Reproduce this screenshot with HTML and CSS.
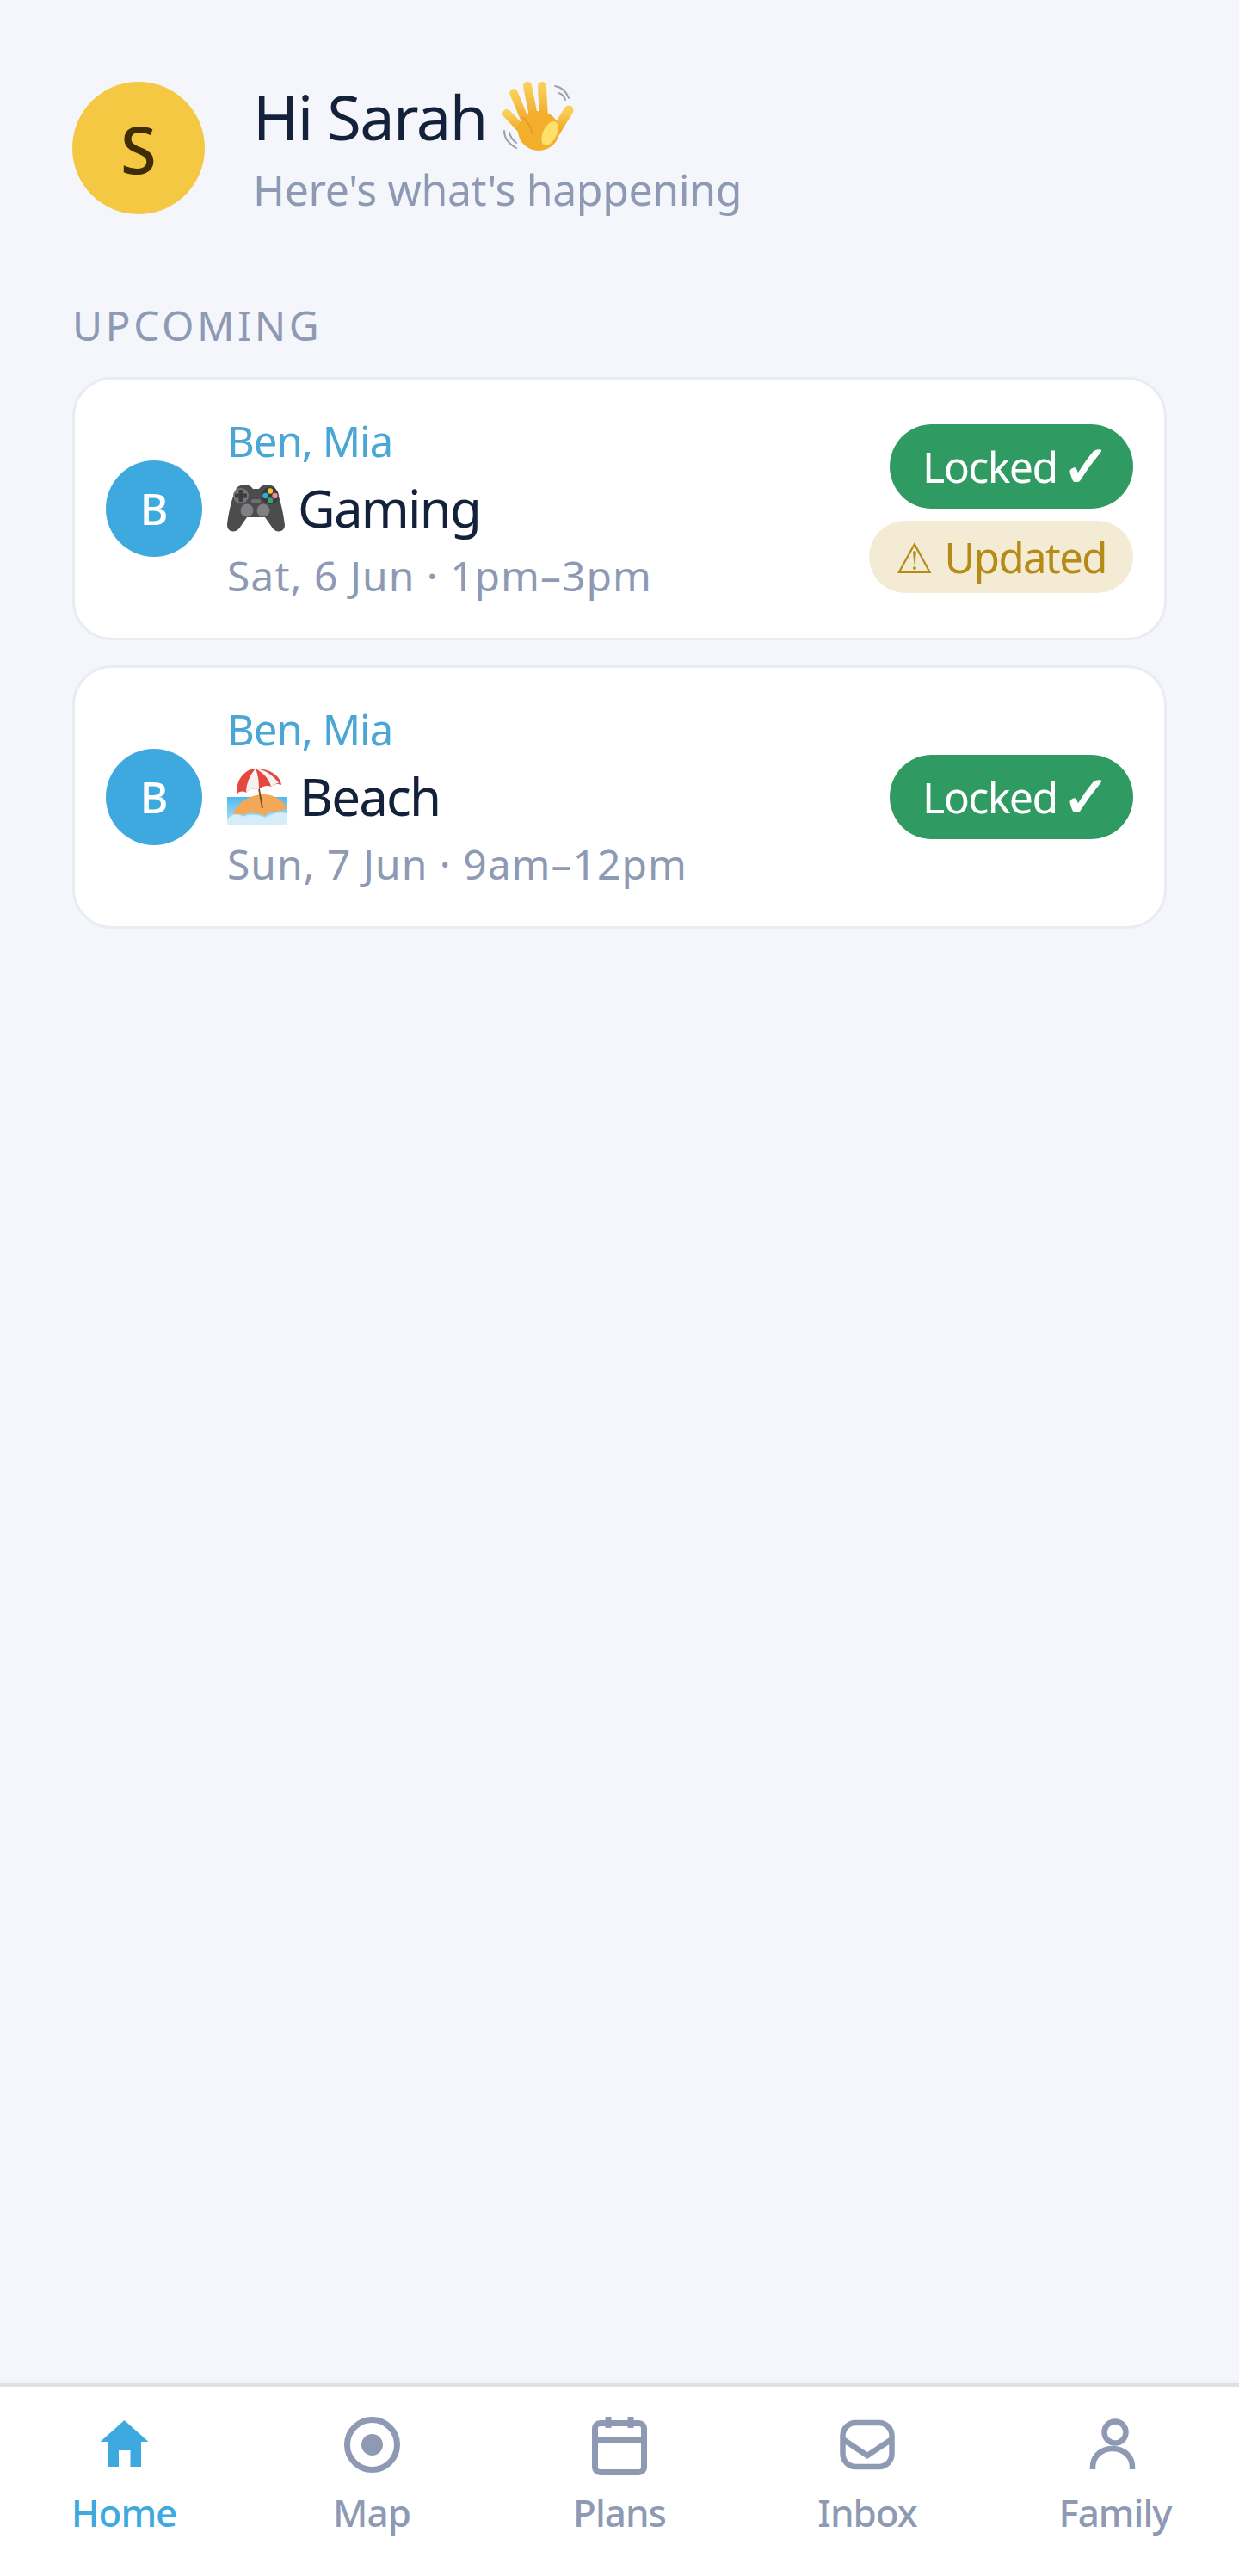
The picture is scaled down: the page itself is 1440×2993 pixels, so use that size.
FILE: index.html
```html
<!DOCTYPE html>
<html>
<head>
    <meta charset="UTF-8">
    <title>Home</title>
    <link rel="stylesheet" href="styles.css">
</head>
<body>
<div class="page">
    <div class="main">
        <div class="header">
            <div class="avatar">S</div>
            <div class="header_text">
                <div class="hello">Hi Sarah
                    <svg class="emoji_hand" viewBox="0 0 84 82">
                        <defs>
                            <linearGradient id="skin" x1="0" y1="0" x2="0" y2="1">
                                <stop offset="0" stop-color="#f9cf56"/>
                                <stop offset="1" stop-color="#f0a626"/>
                            </linearGradient>
                        </defs>
                        <g fill="none" stroke="#9aa3ad" stroke-width="2" stroke-linecap="round">
                            <path d="M62 6c7 1 13 6 16 14"/>
                            <path d="M66 14c4 1 7 4 8 8"/>
                            <path d="M3 58c0 8 5 15 14 20"/>
                            <path d="M9 60c1 5 4 9 8 12"/>
                        </g>
                        <g stroke="url(#skin)" stroke-linecap="round" fill="none">
                            <path d="M14 14 29 50" stroke-width="9.500"/>
                            <path d="M30 6 38 46" stroke-width="10"/>
                            <path d="M47 6 49 46" stroke-width="10"/>
                            <path d="M6 38 25 58" stroke-width="10"/>
                            <path d="M78 34 62 60" stroke-width="11"/>
                        </g>
                        <ellipse cx="43" cy="58" rx="24" ry="23" fill="#f3ae2c"/>
                        <ellipse cx="56" cy="61" rx="8" ry="15" transform="rotate(25 56 61)" fill="#ffe06a"/>
                        <path d="M24 42c6 4 10 12 12 20" fill="none" stroke="#e0952a" stroke-width="1.500"/>
                    </svg>
                </div>
                <div class="hello_sub">Here's what's happening</div>
            </div>
        </div>
        <div class="section_title">UPCOMING</div>
        <div class="card">
            <div class="card_avatar">B</div>
            <div class="card_text">
                <div class="names">Ben, Mia</div>
                <div class="event">
                    <svg class="emoji_game" viewBox="0 0 67 55">
                        <path d="M12 3C17-1 27-1 30 5H37C40-1 50-1 55 3 60 8 66 35 67 47 67 55 58 57 53 51L44 38H23L14 51C9 57 0 55 0 47 1 35 7 8 12 3Z" fill="#4c4b4e"/>
                        <circle cx="16" cy="13" r="9" fill="#77767a"/>
                        <path d="M13.500 6h5v4.500H23v5h-4.500V20h-5v-4.500H9v-5h4.500z" fill="#3d3c3f"/>
                        <circle cx="50" cy="13" r="10" fill="#3a393c"/>
                        <circle cx="50" cy="7.500" r="3.200" fill="#f4c92e"/>
                        <circle cx="55.500" cy="13" r="3.200" fill="#ee8aa0"/>
                        <circle cx="44.500" cy="13" r="3.200" fill="#3aa6dc"/>
                        <circle cx="50" cy="18.500" r="3.200" fill="#35a86f"/>
                        <rect x="28" y="17" width="11" height="5" rx="2" fill="#6e6d71"/>
                        <circle cx="23" cy="30" r="7.500" fill="#807f83"/>
                        <circle cx="42" cy="30" r="7.500" fill="#807f83"/>
                    </svg>
                    <span>Gaming</span>
                </div>
                <div class="when">Sat, 6 Jun · 1pm–3pm</div>
            </div>
            <div class="pills">
                <div class="pill_locked">Locked <span class="check">✓</span></div>
                <div class="pill_updated"><span class="warn">⚠</span> Updated</div>
            </div>
        </div>
        <div class="card">
            <div class="card_avatar">B</div>
            <div class="card_text">
                <div class="names">Ben, Mia</div>
                <div class="event">
                    <svg class="emoji_beach" viewBox="0 0 69 66">
                        <defs>
                            <linearGradient id="sea" x1="0" y1="0" x2="0" y2="1">
                                <stop offset="0" stop-color="#4fb8ec"/>
                                <stop offset="1" stop-color="#b9e3f6"/>
                            </linearGradient>
                        </defs>
                        <rect y="34" width="69" height="32" fill="url(#sea)"/>
                        <path d="M7 56C10 40 28 31 42 31 55 31 66 38 69 47 66 51 60 48 56 52 51 49 47 52 44 56 36 52 26 51 18 55 14 53 10 54 7 56Z" fill="#f3a857"/>
                        <path d="M0 60C6 52 14 53 18 57 26 53 36 54 44 58 50 54 60 50 69 53V66H0Z" fill="#d5edf8"/>
                        <path d="M33 2 41 47" stroke="#7a4a24" stroke-width="1.800"/>
                        <path d="M12 30C9 14 22 1 33 1 49 1 62 9 63 20 58 18 54 19 51 22 47 20 41 21 37 25 31 23 25 25 22 29 19 27 15 27 12 30Z" fill="#e5483f"/>
                        <path d="M33 1C27 8 22 18 22 29 25 25 31 23 37 25 37 16 36 8 33 1ZM33 1C42 6 49 13 51 22 54 19 58 18 60 18 54 9 44 2 33 1Z" fill="#f6f1f3"/>
                    </svg>
                    <span>Beach</span>
                </div>
                <div class="when">Sun, 7 Jun · 9am–12pm</div>
            </div>
            <div class="pills">
                <div class="pill_locked">Locked <span class="check">✓</span></div>
            </div>
        </div>
    </div>
    <div class="nav">
        <div class="nav_item active">
            <svg viewBox="0 0 64 72"><path d="M32.500 4 4.500 29H13v29h13V39h13.500v19H52V29h8.500z" fill="currentColor"/></svg>
            <span>Home</span>
        </div>
        <div class="nav_item">
            <svg viewBox="0 0 64 72"><circle cx="32.500" cy="32.500" r="29" fill="none" stroke="currentColor" stroke-width="7"/><circle cx="32.500" cy="32.500" r="12.500" fill="currentColor"/></svg>
            <span>Map</span>
        </div>
        <div class="nav_item">
            <svg viewBox="0 0 64 72" fill="none" stroke="currentColor" stroke-width="7"><rect x="3.500" y="7.500" width="57" height="57" rx="6"/><path d="M3.500 27h57M19 0v13M45 0v13"/></svg>
            <span>Plans</span>
        </div>
        <div class="nav_item">
            <svg viewBox="0 0 64 72" fill="none" stroke="currentColor" stroke-width="6.500"><rect x="3.500" y="7" width="57" height="51" rx="15"/><path d="M5 27 32 45 59 27"/></svg>
            <span>Inbox</span>
        </div>
        <div class="nav_item">
            <svg viewBox="0 0 64 72" fill="none" stroke="currentColor" stroke-width="6.500"><circle cx="32" cy="18" r="12.500"/><path d="M6 61V58C6 46 16 37 29 37S52 46 52 58v3"/></svg>
            <span>Family</span>
        </div>
    </div>
</div>
</body>
</html>
```

FILE: styles.css
```css
* {
    margin: 0;
    padding: 0;
    box-sizing: border-box;
}

body {
    background: #f4f6fb;
    font-family: "Noto Sans", sans-serif;
    color: #14213a;
}

.page {
    height: 2993px;
    display: flex;
    flex-direction: column;
}

.main {
    flex: 1;
    padding: 95px 84px 0;
}

.header {
    display: flex;
    align-items: center;
    gap: 56px;
}

.avatar {
    width: 154px;
    height: 154px;
    border-radius: 50%;
    background: #f4c842;
    color: #3f2e05;
    font-size: 76px;
    font-weight: 500;
    display: flex;
    align-items: center;
    justify-content: center;
}

.hello {
    height: 80px;
    margin-bottom: 16px;
    font-size: 72px;
    line-height: 80px;
    letter-spacing: -1.500px;
    display: flex;
    align-items: center;
    gap: 17px;
}

.emoji_hand {
    width: 84px;
    height: 82px;
    flex-shrink: 0;
}

.hello_sub {
    font-size: 50px;
    line-height: 58px;
    letter-spacing: -0.400px;
    color: #8e9ab3;
}

.section_title {
    margin-top: 96px;
    font-size: 48px;
    line-height: 66px;
    letter-spacing: 3.500px;
    color: #8e9ab3;
}

.card {
    height: 306px;
    margin-top: 29px;
    padding: 0 36px;
    display: flex;
    align-items: center;
    gap: 29px;
    background: white;
    border: 3px solid #e9ecf2;
    border-radius: 46px;
}

.section_title + .card {
    margin-top: 27px;
}

.card_avatar {
    width: 112px;
    height: 112px;
    border-radius: 50%;
    background: #3da9de;
    color: white;
    font-size: 50px;
    font-weight: 500;
    display: flex;
    align-items: center;
    justify-content: center;
}

.card_text {
    flex: 1;
}

.names {
    font-size: 49px;
    line-height: 72px;
    color: #4aa6d4;
    letter-spacing: -1px;
}

.event {
    font-size: 60px;
    line-height: 84px;
    letter-spacing: -1.800px;
    display: flex;
    align-items: center;
    gap: 15px;
}

.emoji_game {
    width: 67px;
    height: 55px;
}

.emoji_beach {
    width: 69px;
    height: 66px;
}

.when {
    font-size: 48px;
    line-height: 74px;
    color: #8e9ab3;
    letter-spacing: 1px;
}

.pills {
    display: flex;
    flex-direction: column;
    align-items: flex-end;
    gap: 14px;
}

.pill_locked {
    height: 98px;
    padding: 0 32px 0 38px;
    border-radius: 49px;
    background: #2f9b63;
    color: white;
    font-size: 50px;
    line-height: 98px;
    letter-spacing: -1.600px;
    word-spacing: -6px;
    white-space: nowrap;
}

.check {
    font-family: "DejaVu Sans", sans-serif;
    font-size: 68px;
    line-height: 1;
    letter-spacing: -6px;
    vertical-align: -5px;
    -webkit-text-stroke: 1.500px white;
}

.pill_updated {
    height: 84px;
    padding: 0 31px;
    border-radius: 42px;
    background: #f3ebd3;
    color: #b58a16;
    font-size: 49px;
    line-height: 84px;
    letter-spacing: -1.500px;
    white-space: nowrap;
}

.warn {
    font-family: "DejaVu Sans", sans-serif;
    margin-right: 3px;
}

.nav {
    height: 224px;
    padding-top: 35px;
    display: grid;
    grid-template-columns: repeat(5, 1fr);
    background: white;
    border-top: 4px solid #dfe1e6;
    box-shadow: 0 -2px 6px rgba(0, 0, 0, 0.03);
}

.nav_item {
    display: flex;
    flex-direction: column;
    align-items: center;
    color: #8e9ab3;
    font-size: 44px;
    font-weight: 500;
    letter-spacing: -1px;
    line-height: 60px;
}

.nav_item svg {
    width: 64px;
    height: 72px;
    overflow: visible;
    margin-bottom: 9px;
}

.active {
    color: #3da9de;
}
```
